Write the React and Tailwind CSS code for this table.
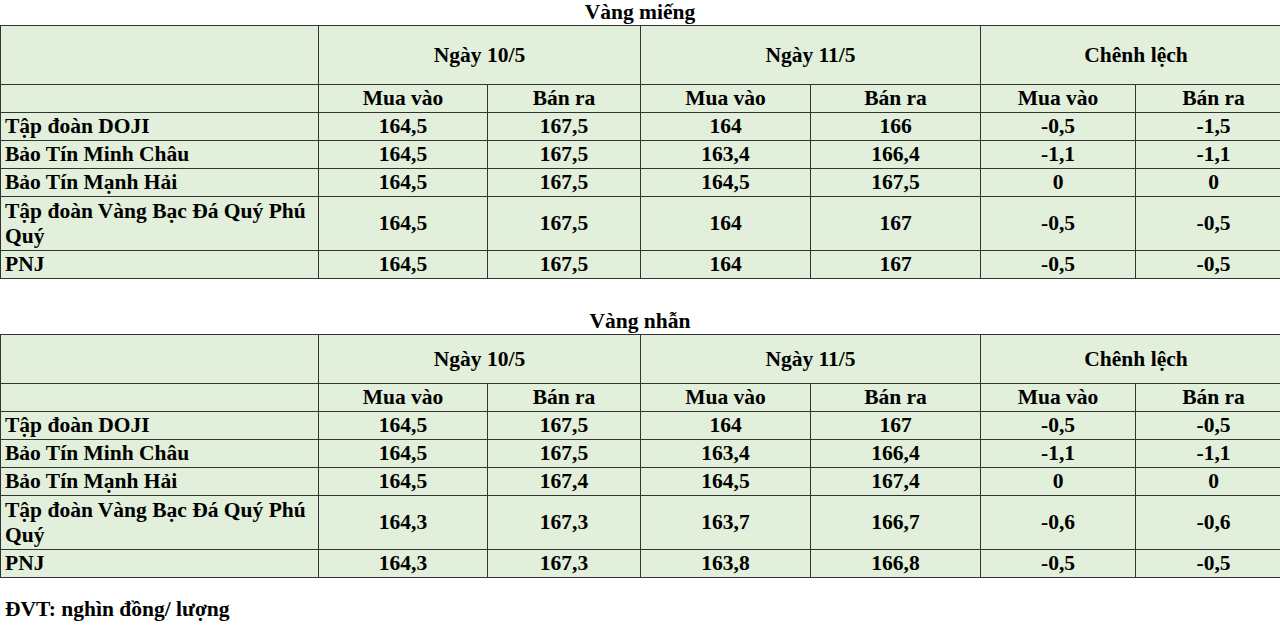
import React from 'react';

const cols = [318, 169, 153, 170, 170, 155, 156];

const mieng = [
  ['Tập đoàn DOJI', '164,5', '167,5', '164', '166', '-0,5', '-1,5'],
  ['Bảo Tín Minh Châu', '164,5', '167,5', '163,4', '166,4', '-1,1', '-1,1'],
  ['Bảo Tín Mạnh Hải', '164,5', '167,5', '164,5', '167,5', '0', '0'],
  ['Tập đoàn Vàng Bạc Đá Quý Phú Quý', '164,5', '167,5', '164', '167', '-0,5', '-0,5'],
  ['PNJ', '164,5', '167,5', '164', '167', '-0,5', '-0,5'],
];

const nhan = [
  ['Tập đoàn DOJI', '164,5', '167,5', '164', '167', '-0,5', '-0,5'],
  ['Bảo Tín Minh Châu', '164,5', '167,5', '163,4', '166,4', '-1,1', '-1,1'],
  ['Bảo Tín Mạnh Hải', '164,5', '167,4', '164,5', '167,4', '0', '0'],
  ['Tập đoàn Vàng Bạc Đá Quý Phú Quý', '164,3', '167,3', '163,7', '166,7', '-0,6', '-0,6'],
  ['PNJ', '164,3', '167,3', '163,8', '166,8', '-0,5', '-0,5'],
];

const cell = 'border border-[#333] p-0 text-center align-middle';

function GoldTable({ title, rows, headH }) {
  return (
    <div>
      <div className="h-[25px] text-center leading-[25px]">{title}</div>
      <table className="table-fixed border-collapse bg-[#e2efda] w-[1291px]">
        <colgroup>
          {cols.map((w, i) => (
            <col key={i} style={{ width: w }} />
          ))}
        </colgroup>
        <tbody>
          <tr className={headH}>
            <td className={cell}></td>
            <td className={cell} colSpan={2}>Ngày 10/5</td>
            <td className={cell} colSpan={2}>Ngày 11/5</td>
            <td className={cell} colSpan={2}>Chênh lệch</td>
          </tr>
          <tr className="h-[28px]">
            <td className={cell}></td>
            <td className={cell}>Mua vào</td>
            <td className={cell}>Bán ra</td>
            <td className={cell}>Mua vào</td>
            <td className={cell}>Bán ra</td>
            <td className={cell}>Mua vào</td>
            <td className={cell}>Bán ra</td>
          </tr>
          {rows.map((r) => (
            <tr key={r[0]} className={r[0].length > 20 ? 'h-[54px]' : 'h-[28px]'}>
              <td className="border border-[#333] py-0 pl-[4px] pr-1 text-left align-middle">{r[0]}</td>
              {r.slice(1).map((v, i) => (
                <td key={i} className={cell}>{v}</td>
              ))}
            </tr>
          ))}
        </tbody>
      </table>
    </div>
  );
}

export default function App() {
  return (
    <div
      className="w-[1280px] h-[627px] overflow-hidden bg-white text-black font-bold text-[21.5px] leading-[25px]"
      style={{ fontFamily: '"Liberation Serif", "Times New Roman", serif' }}
    >
      <GoldTable title="Vàng miếng" rows={mieng} headH="h-[59px]" />
      <div className="mt-[30px]">
        <GoldTable title="Vàng nhẫn" rows={nhan} headH="h-[49px]" />
      </div>
      <div className="mt-[19px] pl-[5px] h-[25px]">ĐVT: nghìn đồng/ lượng</div>
    </div>
  );
}
